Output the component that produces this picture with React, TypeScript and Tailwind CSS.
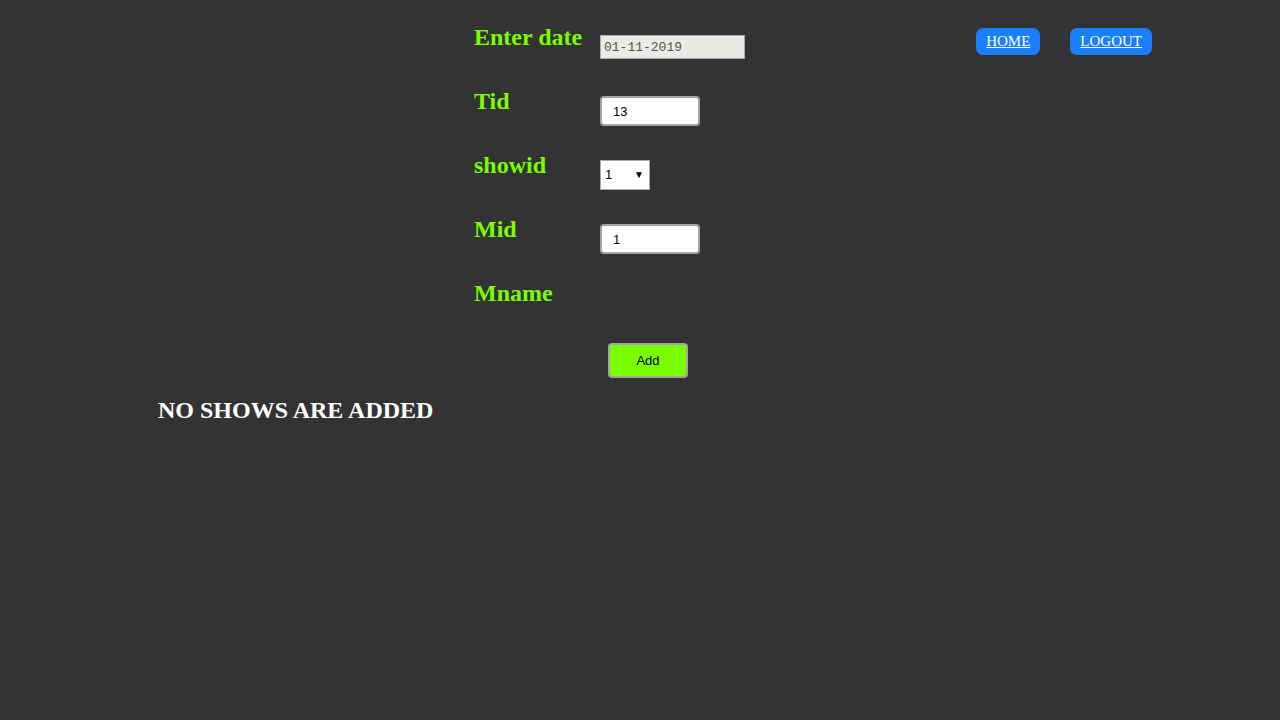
import React from 'react';

const serif = { fontFamily: '"Liberation Serif", "Times New Roman", serif' };

const FormRow: React.FC<{ label: string; children?: React.ReactNode }> = ({ label, children }) => (
  <div className="flex h-[48px] items-center">
    <h2 className="w-[126px] self-start text-[24px] font-bold leading-[28px] text-[#7cfc00]">{label}</h2>
    {children}
  </div>
);

const inputCls =
  'h-[30px] w-[100px] rounded-[4px] border-2 border-[#a3a3a3] bg-white px-[11px] text-[13px] text-black outline-none font-["Liberation_Sans",Arial,sans-serif]';

export default function App() {
  return (
    <div className="min-h-[720px] w-full bg-[#333333]" style={serif}>
      <div className="flex items-start justify-between pl-[474px] pr-[128px]">
        <form className="flex flex-col gap-[16px] pt-[23px]" onSubmit={(e) => e.preventDefault()}>
          <FormRow label="Enter date">
            <input
              type="text"
              disabled
              value="01-11-2019"
              readOnly
              className='h-[24px] w-[145px] border border-[#a9a9a9] bg-[#ebebe4] px-[3px] text-[13px] text-[#545454] font-["Liberation_Mono",monospace]'
            />
          </FormRow>
          <FormRow label="Tid">
            <input type="text" defaultValue="13" className={inputCls} />
          </FormRow>
          <FormRow label="showid">
            <div className="relative h-[30px] w-[50px]">
              <select className='h-full w-full appearance-none border border-[#a9a9a9] bg-white pl-[4px] text-[13px] text-black outline-none font-["Liberation_Sans",Arial,sans-serif]'>
                <option>1</option>
              </select>
              <span className="pointer-events-none absolute right-[6px] top-[9px] text-[10px] leading-[12px] text-black">▼</span>
            </div>
          </FormRow>
          <FormRow label="Mid">
            <input type="text" defaultValue="1" className={inputCls} />
          </FormRow>
          <FormRow label="Mname" />
          <div className="pl-[134px]">
            <button
              type="submit"
              className='h-[35px] w-[80px] rounded-[4px] border-2 border-[#a3a3a3] bg-[#7cfc00] text-[13px] text-black font-["Liberation_Sans",Arial,sans-serif]'
            >
              Add
            </button>
          </div>
        </form>
        <nav className="flex gap-[30px] pt-[28px]">
          <a href="#" className="rounded-[7px] bg-[#1a7ffb] px-[10px] py-[5px] text-[15px] leading-[17px] text-white underline">
            HOME
          </a>
          <a href="#" className="rounded-[7px] bg-[#1a7ffb] px-[10px] py-[5px] text-[15px] leading-[17px] text-white underline">
            LOGOUT
          </a>
        </nav>
      </div>
      <h2 className="mt-[18px] pl-[158px] text-[24px] font-bold leading-[28px] text-white">NO SHOWS ARE ADDED</h2>
    </div>
  );
}
